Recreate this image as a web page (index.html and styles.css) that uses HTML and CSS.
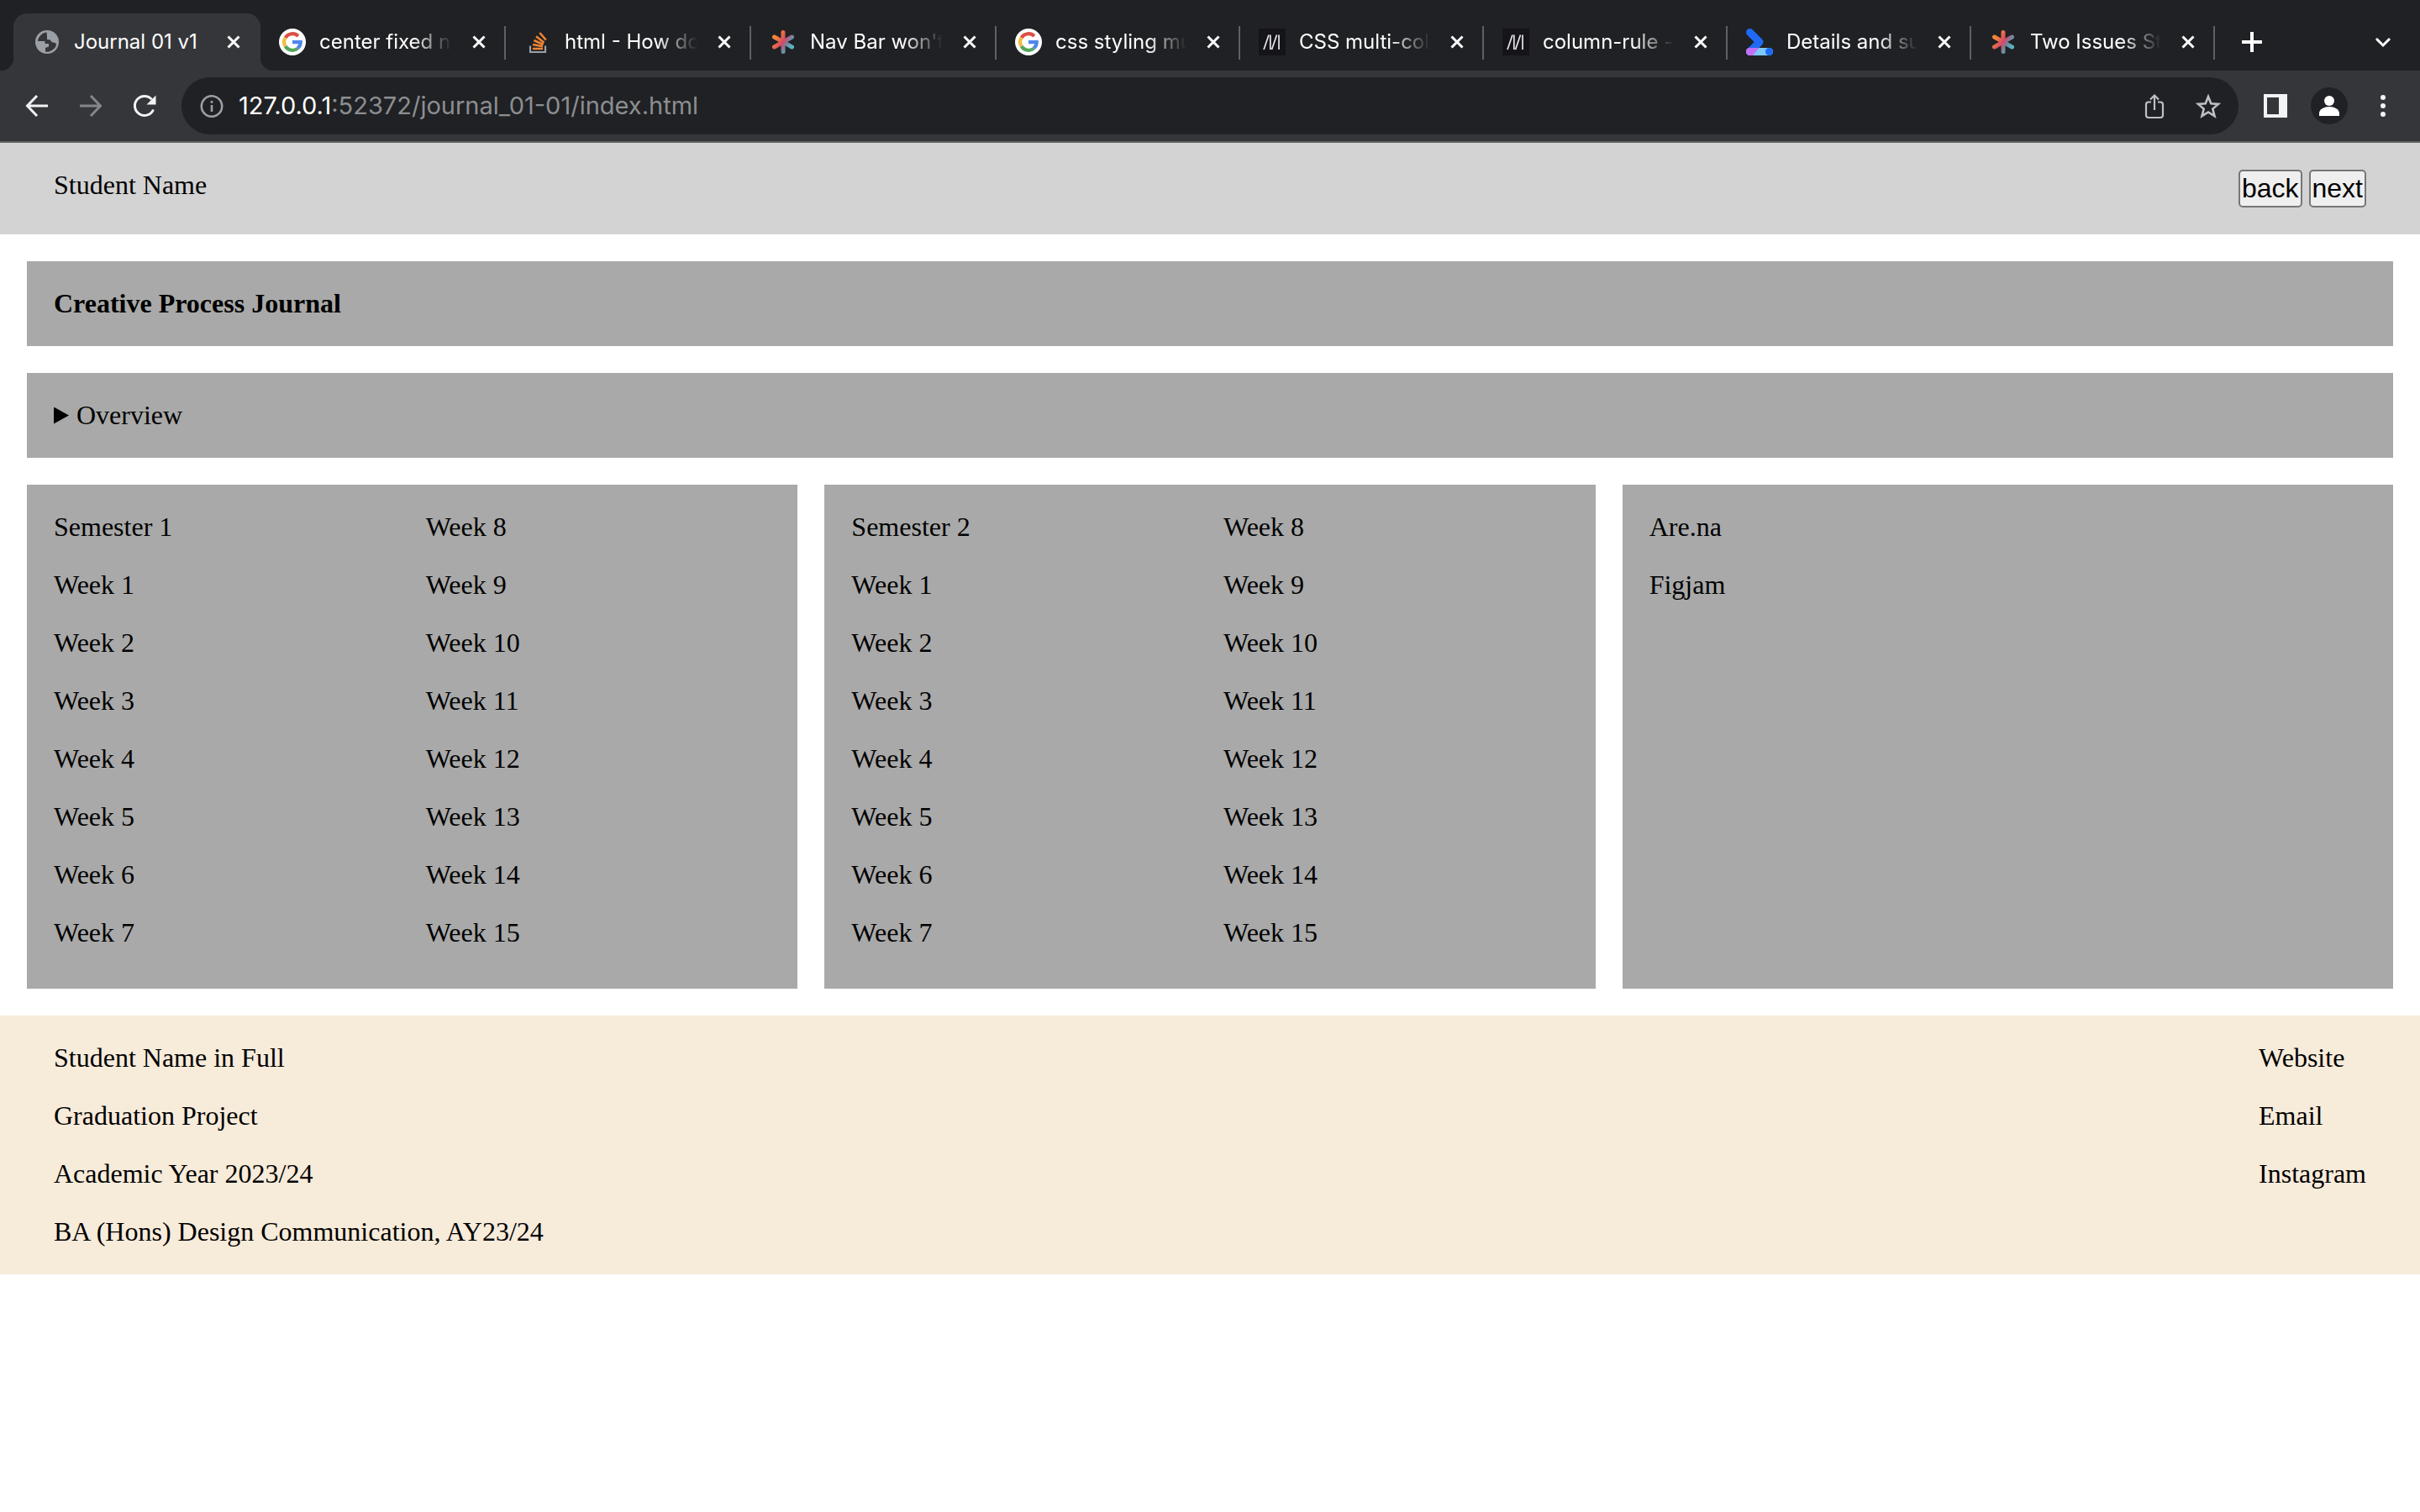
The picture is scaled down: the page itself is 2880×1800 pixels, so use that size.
FILE: index.html
```html
<!DOCTYPE html>
<html lang="en">
<head>
<meta charset="utf-8">
<title>Journal 01 v1</title>
<link rel="stylesheet" href="styles.css">
</head>
<body>
<svg class="defs" aria-hidden="true">
  <defs>
    <linearGradient id="warm" gradientUnits="userSpaceOnUse" x1="4" y1="8" x2="28" y2="24">
      <stop offset="0.15" stop-color="#f58435"/><stop offset="0.5" stop-color="#d5476b"/><stop offset="0.7" stop-color="#6f8ba0"/><stop offset="1" stop-color="#4fc4cf"/>
    </linearGradient>
    <symbol id="close" viewBox="0 0 16 16"><path d="M1.500 1.500l13 13M14.500 1.500l-13 13" fill="none" stroke="#fff" stroke-width="3"/></symbol>
    <symbol id="google" viewBox="0 0 32 32">
      <circle cx="16" cy="16" r="16" fill="#fff"/>
      <g fill="none" stroke-width="4.200">
        <path d="M22.900 8.900A9.900 9.900 0 0 0 7.600 10.900" stroke="#dc5044"/>
        <path d="M7.600 10.900a9.900 9.900 0 0 0 0 10.300" stroke="#f5bd41"/>
        <path d="M7.600 21.200a9.900 9.900 0 0 0 14.800 2.300" stroke="#55a65c"/>
        <path d="M22.400 23.500A9.900 9.900 0 0 0 25.700 16.200H16" stroke="#4f86ec"/>
      </g>
    </symbol>
    <symbol id="asterisk" viewBox="0 0 32 32">
      <path d="M16 4.500v23M5.500 10l21 12M26.500 10l-21 12" fill="none" stroke="url(#warm)" stroke-width="5" stroke-linecap="round"/>
    </symbol>
    <symbol id="mdn" viewBox="0 0 32 32">
      <path fill="#15141a" d="M0 0h32v32H0z"/>
      <path d="M6 25l6-17.500M13.800 7.500V25M15.500 25l6-17.500M24 7.500V25" fill="none" stroke="#e8e8ea" stroke-width="1.700"/>
    </symbol>
  </defs>
</svg>

<header class="browser">
  <nav class="tabs" aria-label="Open tabs">
    <div class="tab tab-active">
      <svg class="favicon" viewBox="0 0 32 32"><circle cx="16" cy="16" r="14" fill="#9aa0a6"/><path d="M15.500 4.500c-5 .5-10 5-10.500 10.500h8.500v3h4.500v3.500l-4 1.500v4.500c5 1 10-2 12.500-6.500l.5-3-2.500-1.500c-3 .5-3.500-1-4.500-3l-4-.5v-4z" fill="#35363a"/><path d="M16 5l3 1.500-.5 4-2.500 2.500h5l3 3.500 3-.5c0-6-5-11-11-11z" fill="#9aa0a6"/></svg>
      <a class="title" href="#">Journal 01 v1</a>
      <button class="close" aria-label="Close tab"><svg><use href="#close"/></svg></button>
    </div>
    <div class="tab tab-wide">
      <svg class="favicon"><use href="#google"/></svg>
      <a class="title" href="#">center fixed n</a>
      <button class="close" aria-label="Close tab"><svg><use href="#close"/></svg></button>
    </div>
    <div class="tab tab-wide">
      <svg class="favicon" viewBox="0 0 32 32"><path d="M7 20.500V28h18v-7.500" fill="none" stroke="#9aa0a6" stroke-width="2.200"/><g stroke="#ee8434" stroke-width="2.600"><path d="M10 24h12M10 19l12 2.200M11.300 14l11.300 5M14 9.300l9.500 7.500M18.300 5l7.400 8.500"/></g></svg>
      <a class="title" href="#">html - How do</a>
      <button class="close" aria-label="Close tab"><svg><use href="#close"/></svg></button>
    </div>
    <div class="tab tab-wide">
      <svg class="favicon"><use href="#asterisk"/></svg>
      <a class="title" href="#">Nav Bar won't</a>
      <button class="close" aria-label="Close tab"><svg><use href="#close"/></svg></button>
    </div>
    <div class="tab">
      <svg class="favicon"><use href="#google"/></svg>
      <a class="title" href="#">css styling mu</a>
      <button class="close" aria-label="Close tab"><svg><use href="#close"/></svg></button>
    </div>
    <div class="tab">
      <svg class="favicon"><use href="#mdn"/></svg>
      <a class="title" href="#">CSS multi-col</a>
      <button class="close" aria-label="Close tab"><svg><use href="#close"/></svg></button>
    </div>
    <div class="tab">
      <svg class="favicon"><use href="#mdn"/></svg>
      <a class="title" href="#">column-rule -</a>
      <button class="close" aria-label="Close tab"><svg><use href="#close"/></svg></button>
    </div>
    <div class="tab">
      <svg class="favicon" viewBox="0 0 32 32"><path d="M4.500 4.500l11.500 11.500L4.500 27.500" fill="none" stroke="#1f6af5" stroke-width="9" stroke-linecap="round" stroke-linejoin="round"/><rect y="23" width="32" height="9" rx="4.500" fill="#7cc9fb"/><path d="M4.500 23H15.500L8 32H4.500a4.500 4.500 0 0 1 0-9z" fill="#c46ff6"/><circle cx="27.500" cy="27.500" r="4.500" fill="#1f6af5"/></svg>
      <a class="title" href="#">Details and su</a>
      <button class="close" aria-label="Close tab"><svg><use href="#close"/></svg></button>
    </div>
    <div class="tab">
      <svg class="favicon"><use href="#asterisk"/></svg>
      <a class="title" href="#">Two Issues St</a>
      <button class="close" aria-label="Close tab"><svg><use href="#close"/></svg></button>
    </div>
    <button class="icon-button new-tab" aria-label="New tab"><svg viewBox="0 0 32 32"><path d="M16 4v24M4 16h24" fill="none" stroke="#fff" stroke-width="4"/></svg></button>
    <button class="icon-button tab-search" aria-label="Search tabs"><svg viewBox="0 0 32 32"><path d="M8 12l8 8 8-8" fill="none" stroke="#fff" stroke-width="3"/></svg></button>
  </nav>

  <div class="toolbar">
    <button class="icon-button" aria-label="Back"><svg viewBox="0 0 32 32"><path d="M29 16H5M16 4L4.500 16 16 28" fill="none" stroke="#f1f3f4" stroke-width="3"/></svg></button>
    <button class="icon-button" aria-label="Forward"><svg viewBox="0 0 32 32"><path d="M3 16h24M16 4l11.500 12L16 28" fill="none" stroke="#84868a" stroke-width="3"/></svg></button>
    <button class="icon-button" aria-label="Reload"><svg viewBox="0 0 32 32"><path d="M26.500 20.500A11.500 11.500 0 1 1 24.500 8.300" fill="none" stroke="#f1f3f4" stroke-width="3"/><path d="M29.500 3.500v11h-11z" fill="#f1f3f4"/></svg></button>
    <div class="address">
      <svg class="info" viewBox="0 0 32 32"><circle cx="16" cy="16.500" r="12.200" fill="none" stroke="#9aa0a6" stroke-width="2.600"/><path d="M16 15v8M16 10v2.800" stroke="#9aa0a6" stroke-width="2.600"/></svg>
      <div class="url"><span class="host">127.0.0.1</span>:52372/journal_01-01/index.html</div>
      <button class="icon-button" aria-label="Share"><svg viewBox="0 0 32 32"><path d="M12 11.500H9a3 3 0 0 0-3 3V27a3 3 0 0 0 3 3h14a3 3 0 0 0 3-3V14.500a3 3 0 0 0-3-3h-3M16 21V4M11 8.500l5-5 5 5" fill="none" stroke="#bdc1c6" stroke-width="2.200"/></svg></button>
      <button class="icon-button" aria-label="Bookmark"><svg viewBox="0 0 32 32"><path d="M16 5l3.300 8.300 8.700.6-6.700 5.700 2.200 8.600L16 23.500l-7.500 4.700 2.200-8.600L4 13.900l8.700-.6z" fill="none" stroke="#bdc1c6" stroke-width="2.600"/></svg></button>
    </div>
    <button class="icon-button" aria-label="Side panel"><svg viewBox="0 0 32 32"><path d="M2 2h28v28H2zM6 6v20h14V6z" fill="#f1f3f4" fill-rule="evenodd"/></svg></button>
    <button class="icon-button avatar" aria-label="Profile"><svg viewBox="0 0 32 32"><circle cx="16" cy="10" r="6" fill="#fff"/><path d="M4 28v-3c0-5 6-8 12-8s12 3 12 8v3z" fill="#fff"/></svg></button>
    <button class="icon-button" aria-label="Menu"><svg viewBox="0 0 32 32"><g fill="#f1f3f4"><circle cx="16" cy="6" r="3"/><circle cx="16" cy="16" r="3"/><circle cx="16" cy="26" r="3"/></g></svg></button>
  </div>
</header>

<div class="page">
  <header class="site-header">
    <div>Student Name</div>
    <nav class="pager"><button>back</button><button>next</button></nav>
  </header>

  <main class="content">
    <h1 class="panel">Creative Process Journal</h1>
    <details class="panel"><summary>Overview</summary></details>
    <div class="sections">
      <section class="panel semester">
        <p>Semester 1</p><p>Week 1</p><p>Week 2</p><p>Week 3</p><p>Week 4</p><p>Week 5</p><p>Week 6</p><p>Week 7</p>
        <p>Week 8</p><p>Week 9</p><p>Week 10</p><p>Week 11</p><p>Week 12</p><p>Week 13</p><p>Week 14</p><p>Week 15</p>
      </section>
      <section class="panel semester">
        <p>Semester 2</p><p>Week 1</p><p>Week 2</p><p>Week 3</p><p>Week 4</p><p>Week 5</p><p>Week 6</p><p>Week 7</p>
        <p>Week 8</p><p>Week 9</p><p>Week 10</p><p>Week 11</p><p>Week 12</p><p>Week 13</p><p>Week 14</p><p>Week 15</p>
      </section>
      <section class="panel links">
        <a href="#">Are.na</a>
        <a href="#">Figjam</a>
      </section>
    </div>
  </main>

  <footer class="site-footer">
    <div class="stack">
      <p>Student Name in Full</p>
      <p>Graduation Project</p>
      <p>Academic Year 2023/24</p>
      <p>BA (Hons) Design Communication, AY23/24</p>
    </div>
    <div class="stack">
      <a href="#">Website</a>
      <a href="#">Email</a>
      <a href="#">Instagram</a>
    </div>
  </footer>
</div>
</body>
</html>
```
FILE: styles.css
```css
* { box-sizing: border-box; }

body { margin: 0; background: #fff; }

p, h1 { margin: 0; }

a { color: inherit; text-decoration: none; }

.defs { position: absolute; width: 0; height: 0; }

/* Browser frame */
.browser {
  font-family: Inter, "Liberation Sans", sans-serif;
  background: #35363a;
  border-bottom: 2px solid #5f6063;
}

.browser button {
  padding: 0;
  border: 0;
  background: none;
  flex: none;
}

.browser svg { display: block; }

.tabs {
  display: flex;
  height: 84px;
  padding: 16px 28px 0 16px;
  background: #202124;
}

.tab {
  display: flex;
  align-items: center;
  flex: 0 1 290px;
  min-width: 0;
  padding: 0 24px 0 22px;
  position: relative;
}

.tab-wide { flex-basis: 292px; }

.tab::after {
  content: "";
  position: absolute;
  right: 0;
  top: 15px;
  width: 2px;
  height: 40px;
  background: #5f6063;
}

.tab-active {
  flex-basis: 294px;
  padding: 0 24px;
  background: #35363a;
  border-radius: 16px 16px 0 0;
}

/* Flared feet of the selected tab */
.tab-active::before,
.tab-active::after {
  content: "";
  position: absolute;
  top: auto;
  bottom: 0;
  width: 16px;
  height: 16px;
}

.tab-active::before {
  left: -16px;
  background: radial-gradient(circle at 0 0, #202124 16px, #35363a 17px);
}

.tab-active::after {
  right: -16px;
  background: radial-gradient(circle at 100% 0, #202124 16px, #35363a 17px);
}

.favicon {
  width: 32px;
  height: 32px;
  flex: none;
}

.title {
  flex: 1;
  min-width: 0;
  margin: 0 24px 0 16px;
  overflow: hidden;
  white-space: nowrap;
  font-size: 24px;
  line-height: 32px;
  color: #fff;
  -webkit-mask-image: linear-gradient(to right, #000 calc(100% - 48px), transparent);
  mask-image: linear-gradient(to right, #000 calc(100% - 48px), transparent);
}

.tab-active .title {
  -webkit-mask-image: none;
  mask-image: none;
}

.close svg { width: 16px; height: 16px; }

.icon-button svg { width: 32px; height: 32px; }

.new-tab { margin-left: 28px; }

.tab-search { margin-left: auto; }

.toolbar {
  display: flex;
  align-items: center;
  gap: 32px;
  height: 84px;
  padding: 0 28px;
}

.address {
  display: flex;
  align-items: center;
  flex: 1;
  gap: 32px;
  height: 68px;
  padding: 0 20px;
  margin: 0 -4px;
  border-radius: 34px;
  background: #202124;
}

.info { width: 32px; height: 32px; }

.url {
  flex: 1;
  margin-left: -16px;
  font-size: 29px;
  line-height: 36px;
  color: #8c8e91;
}

.host { color: #fff; }

.browser .avatar {
  display: flex;
  align-items: center;
  justify-content: center;
  width: 44px;
  height: 44px;
  margin: 0 -6px;
  border-radius: 50%;
  background: #202124;
}

/* Journal page */
.page {
  font-family: "Liberation Serif", serif;
  font-size: 32px;
  line-height: 37px;
  color: #000;
}

.site-header {
  display: flex;
  justify-content: space-between;
  padding: 32px 64px;
  background: #d3d3d3;
}

.pager { display: flex; gap: 8px; }

.pager button {
  padding: 2px;
  border: 2px solid #767676;
  border-radius: 5px;
  background: #efefef;
  font-family: "Liberation Sans", Arial, sans-serif;
  font-size: 32px;
  line-height: 37px;
  color: #000;
}

.content {
  display: flex;
  flex-direction: column;
  gap: 32px;
  padding: 32px;
}

.panel {
  padding: 32px;
  background: #a9a9a9;
  font-size: 32px;
}

summary {
  display: flex;
  align-items: center;
  gap: 9px;
}

summary::before {
  content: "";
  width: 18px;
  height: 20px;
  background: #000;
  clip-path: polygon(0 0, 100% 50%, 0 100%);
}

details[open] summary::before { clip-path: polygon(0 0, 100% 0, 50% 100%); }

.sections {
  display: grid;
  grid-template-columns: repeat(3, 1fr);
  gap: 32px;
}

.semester {
  display: grid;
  grid-template-rows: repeat(8, auto);
  grid-auto-flow: column;
  grid-auto-columns: 1fr;
  gap: 32px;
  padding-bottom: 48px;
}

.links,
.stack {
  display: flex;
  flex-direction: column;
  gap: 32px;
}

.site-footer {
  display: flex;
  justify-content: space-between;
  padding: 32px 64px;
  background: #f7ebda;
}
```
